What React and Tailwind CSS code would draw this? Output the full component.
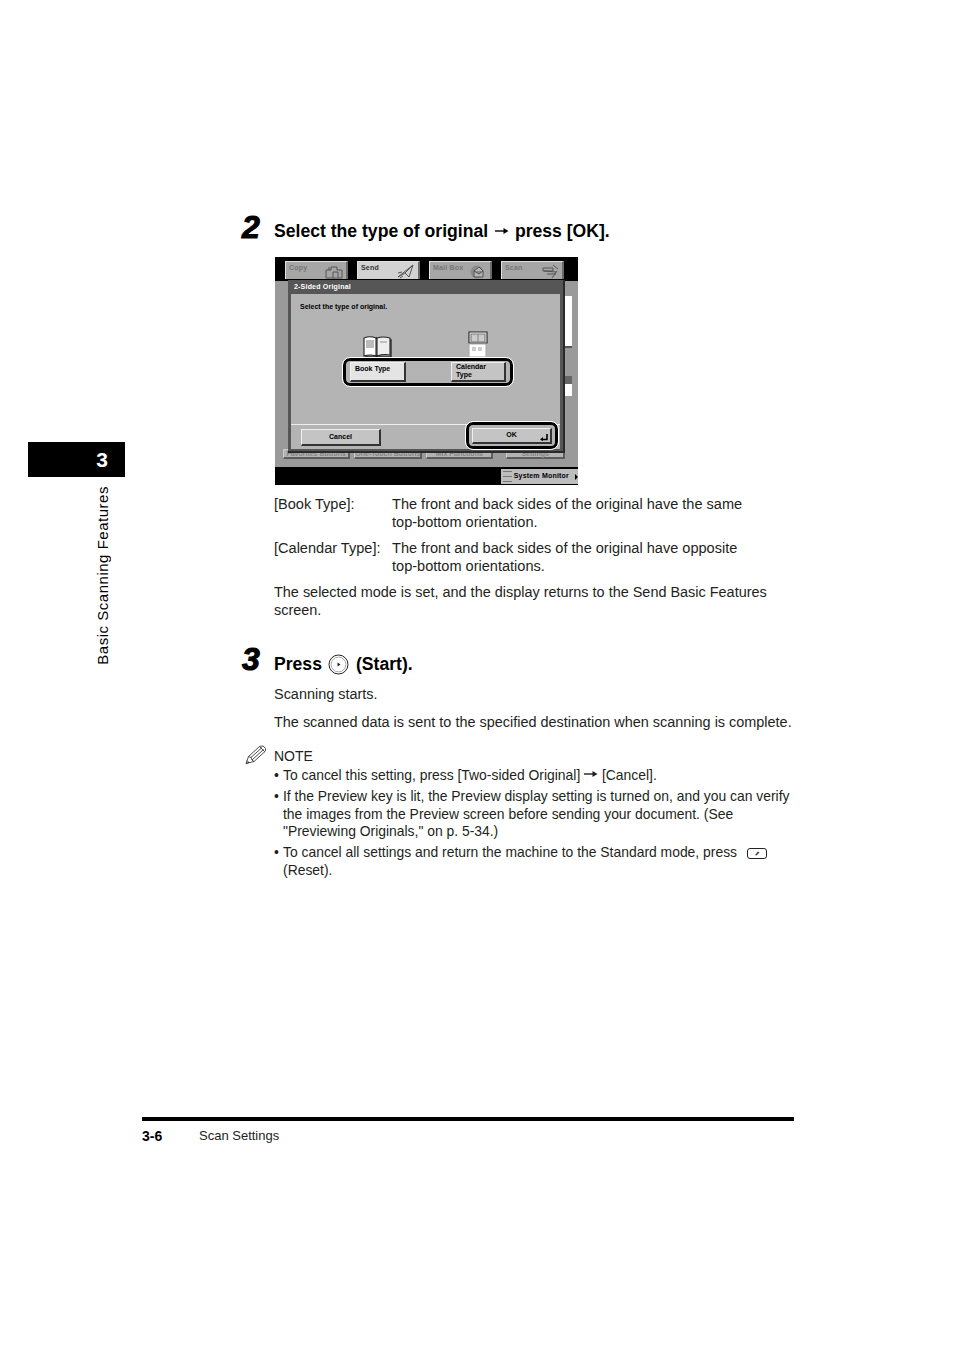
import React from "react";

const Arrow = ({ className = "" }) => (
  <svg width="14" height="8" viewBox="0 0 14 8" className={`inline-block align-[2px] ${className}`}>
    <path d="M0 4H12" stroke="currentColor" strokeWidth="1.4" />
    <path d="M8.5 1L13.5 4L8.5 7Z" fill="currentColor" />
  </svg>
);

const TabIcon = ({ kind }) => (
  <svg width="18" height="15" viewBox="0 0 18 15" fill="none" stroke="#555" strokeWidth="1">
    {kind === "copy" && <path d="M1 14V6h5V3h6v3h5v8H1ZM8 14V8h5v6M4 6V3" />}
    {kind === "send" && <path d="M1 13L16 1L12 13L8 9L1 13ZM16 1L8 9M1 9l4-1M3 14l3-2" />}
    {kind === "mail" && <><circle cx="8" cy="8" r="6.5" fill="#8c8c8c" stroke="none" /><path d="M5 7L10 3L14 7V13H5V7ZM5 7L10 10L14 7" fill="#b5b5b5" /></>}
    {kind === "scan" && <path d="M2 4h10v3H2ZM3 7l12 1M6 10h9M12 1l5 4M11 14l5-7" />}
  </svg>
);

const Tab = ({ label, kind, active }) => (
  <div className={`relative w-[63px] h-[18px] flex justify-between items-start pl-[3px] pr-[3px] pt-[1px] border-t border-l border-[#e2e2e2] border-r-2 border-r-[#6a6a6a] ${active ? "bg-[#d2d2d2] text-[#333]" : "bg-[#a6a6a6] text-[#777]"}`}>
    <span className="text-[7px] leading-[9px] font-bold tracking-[0.2px]">{label}</span>
    <span className="self-end"><TabIcon kind={kind} /></span>
  </div>
);

const SmallBtn = ({ children, className = "" }) => (
  <div className={`flex items-center justify-center bg-[#c4c4c4] border-t border-l border-[#f0f0f0] border-r-2 border-b-2 border-r-[#333] border-b-[#333] text-[7px] font-bold text-black ${className}`}>
    {children}
  </div>
);

const BookIcon = () => (
  <svg width="29" height="22" viewBox="0 0 29 22" fill="none" stroke="#222" strokeWidth="1.1">
    <path d="M1 2Q7 -0.5 13 2V20Q7 18 1 20Z" fill="#fff" />
    <path d="M14 2Q20 0 27 2V19Q20 18 14 20Z" fill="#eee" />
    <path d="M13 2L14 2M13 20L14 20M27 4H28V21H2" strokeWidth="1.3" />
    <path d="M3 4H11V12H3Z" fill="#bbb" stroke="none" />
    <path d="M17 6H24" stroke="#999" />
  </svg>
);

const CalendarIcon = () => (
  <svg width="20" height="26" viewBox="0 0 20 26" fill="none" stroke="#222" strokeWidth="1.1">
    <path d="M1 1H19V12H1Z" fill="#fff" />
    <path d="M3 3H17V11H3Z" fill="#ccc" stroke="#777" />
    <path d="M10 3V11" stroke="#888" />
    <path d="M1 13H18V26H1Z" fill="#fff" stroke="#aaa" />
    <path d="M4 16H8V20H4ZM10 16H14V20H10Z" fill="#ccc" stroke="none" />
  </svg>
);

const Panel = () => (
  <div className="relative w-[303px] h-[228px] ml-px mt-[14px] font-['Liberation_Sans',sans-serif] flex flex-col bg-black">
    <div className="h-[24px] flex pl-[10px] gap-[9px] pt-[4px]">
      <Tab label="Copy" kind="copy" />
      <Tab label="Send" kind="send" active />
      <Tab label="Mail Box" kind="mail" />
      <Tab label="Scan" kind="scan" />
    </div>
    <div className="h-[186px] bg-[#9a9a9a] relative">
      <div className="absolute left-[290px] top-[15px] w-[7px] h-[52px] bg-white border-b-2 border-[#555]" />
      <div className="absolute left-[290px] top-[95px] w-[7px] h-[20px] bg-white border-t-[8px] border-[#666]" />
      <div className="absolute left-[8px] top-[168px] w-[282px] flex gap-[4px] opacity-60">
        <SmallBtn className="w-[69px] h-[10px] !text-[#777]">Favorites Buttons</SmallBtn>
        <SmallBtn className="w-[69px] h-[10px] !text-[#777]">One-Touch Buttons</SmallBtn>
        <SmallBtn className="w-[69px] h-[10px] !text-[#777]">Mix Functions</SmallBtn>
        <SmallBtn className="w-[60px] h-[10px] ml-[9px] !text-[#777]">Settings</SmallBtn>
      </div>
      <div className="absolute left-[13px] top-[-1px] w-[277px] h-[173px] bg-[#565656] border-r-[2px] border-b-[2px] border-[#2a2a2a] flex flex-col px-[3px] pb-[2px]">
        <div className="h-[14px] flex items-center pl-[3px] text-white text-[7px] font-bold tracking-[0.2px]">2-Sided Original</div>
        <div className="flex-1 bg-[#b4b4b4] flex flex-col">
          <div className="h-[130px] relative px-[9px] pt-[8px]">
            <div className="text-[7px] leading-[9px] font-bold text-black">Select the type of original.</div>
            <div className="flex pl-[63px] pt-[25px] h-[39px]">
              <BookIcon />
              <div className="ml-[76px] -mt-[5px]"><CalendarIcon /></div>
            </div>
            <div className="absolute left-[52px] top-[64px] w-[170px] h-[28px] rounded-[7px] border-[3px] border-black outline outline-1 outline-white flex items-center justify-between pl-[4px] pr-[4px]">
              <SmallBtn className="w-[56px] h-[20px] !justify-start !items-start pl-[4px] pt-[1px] leading-[9px] !bg-[#e4e4e4]">Book Type</SmallBtn>
              <SmallBtn className="w-[55px] h-[20px] !justify-start !items-start pl-[4px] leading-[8px]">Calendar<br />Type</SmallBtn>
            </div>
          </div>
          <div className="flex-1 border-t border-[#eee] relative flex items-center pl-[10px]">
            <SmallBtn className="w-[80px] h-[17px]">Cancel</SmallBtn>
            <div className="absolute left-[175px] top-[-3px] w-[92px] h-[27px] rounded-[7px] border-[3px] border-black outline outline-1 outline-white flex items-center justify-center">
              <SmallBtn className="relative w-[80px] h-[16px]">
                OK
                <svg width="8" height="7" viewBox="0 0 8 7" className="absolute right-[2px] bottom-[1px]">
                  <path d="M7 0V5.5H1" stroke="#000" strokeWidth="1.6" fill="none" />
                  <path d="M3 3V7L0 5.5Z" fill="#000" />
                </svg>
              </SmallBtn>
            </div>
          </div>
        </div>
      </div>
    </div>
    <div className="flex-1 flex justify-end items-center">
      <div className="w-[77px] h-[15px] bg-[#bdbdbd] flex items-center gap-[2px] pl-[2px] text-[7px] font-bold text-black">
        <div className="w-[12px] h-[11px] border-y border-[#777] flex items-center"><div className="w-full h-px bg-[#777]" /></div>
        <span className="whitespace-nowrap tracking-[0.2px]">System Monitor</span>
        <span className="w-0 h-0 ml-[4px] mt-[2px] border-l-[3px] border-l-black border-y-[3px] border-y-transparent" />
      </div>
    </div>
  </div>
);

const Pencil = () => (
  <svg width="22" height="20" viewBox="0 0 22 20" fill="none" stroke="#222" strokeWidth="0.8" className="block">
    <path d="M1 18.5L3.5 11.5L14.5 1.5Q17 0.5 19 1.5L20.5 3.5Q21 5 20 6.5L9 16.5Z" fill="#fff" />
    <path d="M3.5 11.5L6 12.5L7 15L9 16.5M6 12.5L17 2.5M7 15L18.5 4.5M14.5 1.5L19.5 6.5M1 18.5L4 17.5L2 15.5" />
  </svg>
);

const StartIcon = () => (
  <svg width="21" height="21" viewBox="0 0 21 21" fill="none" className="inline-block align-[-5px] ml-[6px] mr-[7px]">
    <circle cx="10.5" cy="10.5" r="9.5" stroke="#222" strokeWidth="1" />
    <circle cx="10.5" cy="10.5" r="7.4" stroke="#888" strokeWidth="0.7" />
    <path d="M9.5 8.5L12.5 10.5L9.5 12.5Z" fill="#222" />
  </svg>
);

const ResetKey = () => (
  <svg width="20" height="11" viewBox="0 0 20 11" fill="none" className="inline-block align-[-2px] ml-[6px]">
    <rect x="0.5" y="0.5" width="19" height="10" rx="2.5" stroke="#222" />
    <path d="M8 7L11 3.5L12.5 4.5L9.5 7.5Z" fill="#444" />
  </svg>
);

const StepNumber = ({ children }) => (
  <div className="w-[32px] shrink-0 text-[32px] leading-[32px] font-bold italic text-black [-webkit-text-stroke:1.1px_black]">{children}</div>
);

const Bullet = ({ children, className = "" }) => (
  <div className={`flex text-[13.9px] ${className}`}>
    <span className="w-[9px] shrink-0">•</span>
    <div>{children}</div>
  </div>
);

const Def = ({ term, children, className = "" }) => (
  <div className={`flex text-[14.55px] ${className}`}>
    <div className="w-[118px] shrink-0">{term}</div>
    <div className="whitespace-nowrap">{children}</div>
  </div>
);

export default function App() {
  return (
    <div className="w-[954px] h-[1351px] bg-white flex text-[#231f20] font-['Liberation_Sans',Arial,sans-serif] text-[14px] leading-[17.6px]">
      <aside className="w-[142px] shrink-0 pl-[28px] pt-[442px] flex flex-col">
        <div className="w-[97px] h-[35px] bg-black text-white flex items-center justify-end pr-[17px] text-[21px] font-bold">3</div>
        <div className="w-[97px] flex justify-end pr-[14px] pt-[9px]">
          <span className="[writing-mode:vertical-rl] rotate-180 text-[15px] leading-[17px] tracking-[0.52px] whitespace-nowrap text-black">Basic Scanning Features</span>
        </div>
      </aside>
      <main className="w-[652px] flex flex-col">
        <div className="pl-[100px] pt-[211px] flex flex-col">
          <div className="flex">
            <StepNumber>2</StepNumber>
            <div className="pt-[10px] text-[17.6px] leading-[20px] font-bold text-black whitespace-nowrap">Select the type of original <Arrow className="mx-[1.5px]" /> press [OK].</div>
          </div>
          <div className="pl-[32px] whitespace-nowrap">
            <Panel />
            <Def term="[Book Type]:" className="mt-[11px]">The front and back sides of the original have the same<br />top-bottom orientation.</Def>
            <Def term="[Calendar Type]:" className="mt-[9px]">The front and back sides of the original have opposite<br />top-bottom orientations.</Def>
            <p className="mt-[9px] text-[14.45px]">The selected mode is set, and the display returns to the Send Basic Features<br />screen.</p>
          </div>
          <div className="flex mt-[23px]">
            <StepNumber>3</StepNumber>
            <div className="pt-[11px] text-[17.6px] leading-[21px] font-bold text-black whitespace-nowrap">Press<StartIcon />(Start).</div>
          </div>
          <div className="pl-[32px] whitespace-nowrap">
            <p className="mt-[11px] text-[14.45px]">Scanning starts.</p>
            <p className="mt-[11px] text-[14.45px]">The scanned data is sent to the specified destination when scanning is complete.</p>
            <div className="relative mt-[16px]">
              <div className="absolute left-[-29px] top-[-3px]"><Pencil /></div>
              <div>NOTE</div>
            </div>
            <Bullet className="mt-[2px]">To cancel this setting, press [Two-sided Original] <Arrow /> [Cancel].</Bullet>
            <Bullet className="mt-[3.5px] leading-[17.4px]">If the Preview key is lit, the Preview display setting is turned on, and you can verify<br />the images from the Preview screen before sending your document. (See<br />"Previewing Originals," on p. 5-34.)</Bullet>
            <Bullet className="mt-[3.5px]">To cancel all settings and return the machine to the Standard mode, press <ResetKey /><br />(Reset).</Bullet>
          </div>
        </div>
        <footer className="mt-[238px]">
          <div className="h-[4px] bg-black" />
          <div className="flex items-center pt-[7px] text-[13px] leading-[16px]">
            <span className="w-[57px] font-bold text-[14px] text-black">3-6</span>
            <span>Scan Settings</span>
          </div>
        </footer>
      </main>
    </div>
  );
}
